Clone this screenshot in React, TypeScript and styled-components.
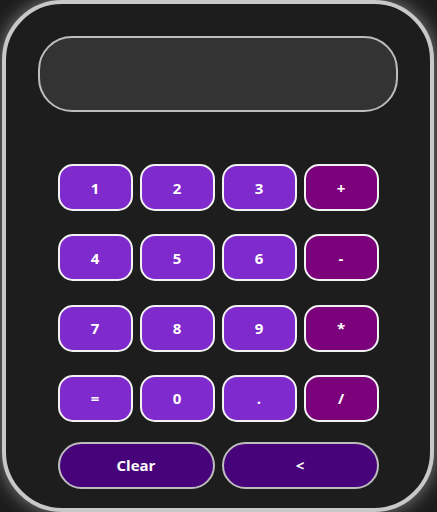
import React from "react";
import styled, { createGlobalStyle } from "styled-components";

const Global = createGlobalStyle`
  html, body { margin: 0; padding: 0; background: #1c1c1c; }
  body { font-family: "Open Sans", "Noto Sans", sans-serif; overflow: hidden; }
`;

const Calculator = styled.div`
  box-sizing: border-box;
  width: 432px;
  height: 512px;
  margin-left: 2px;
  border: 4px solid #c8c8c8;
  border-radius: 60px;
  background: #1d1d1d;
  box-shadow: 0 0 18px rgba(220, 220, 220, 0.55);
  padding: 32px 32px 0;
  display: flex;
  flex-direction: column;
  align-items: center;
`;

const Display = styled.div`
  box-sizing: border-box;
  width: 360px;
  height: 76px;
  border: 2px solid #bdbdbd;
  border-radius: 34px;
  background: #333333;
`;

const Keypad = styled.div`
  margin-top: 52px;
  display: grid;
  grid-template-columns: repeat(4, 75px);
  column-gap: 7px;
  row-gap: 23.3px;
`;

const BottomRow = styled.div`
  margin-top: 20px;
  display: flex;
  gap: 7px;
`;

type Kind = "digit" | "op" | "action";

const colors: Record<Kind, string> = {
  digit: "#7f2acc",
  op: "#7c027c",
  action: "#46037a",
};

const Key = styled.button<{ $kind: Kind }>`
  box-sizing: border-box;
  width: ${(p) => (p.$kind === "action" ? "157px" : "75px")};
  height: 47px;
  border: 2px solid ${(p) => (p.$kind === "action" ? "#bdbdbd" : "#f2f2f2")};
  border-radius: ${(p) => (p.$kind === "action" ? "24px" : "15px")};
  background: ${(p) => colors[p.$kind]};
  color: #ffffff;
  font-family: "Open Sans", "Noto Sans", sans-serif;
  font-weight: 700;
  font-size: 15px;
  padding: 0;
  display: flex;
  align-items: center;
  justify-content: center;
`;

const rows: [string, Kind][][] = [
  [["1", "digit"], ["2", "digit"], ["3", "digit"], ["+", "op"]],
  [["4", "digit"], ["5", "digit"], ["6", "digit"], ["-", "op"]],
  [["7", "digit"], ["8", "digit"], ["9", "digit"], ["*", "op"]],
  [["=", "digit"], ["0", "digit"], [".", "digit"], ["/", "op"]],
];

export default function App() {
  return (
    <>
      <Global />
      <Calculator>
        <Display />
        <Keypad>
          {rows.flat().map(([label, kind]) => (
            <Key key={label} $kind={kind}>
              {label}
            </Key>
          ))}
        </Keypad>
        <BottomRow>
          <Key $kind="action">Clear</Key>
          <Key $kind="action">&lt;</Key>
        </BottomRow>
      </Calculator>
    </>
  );
}
